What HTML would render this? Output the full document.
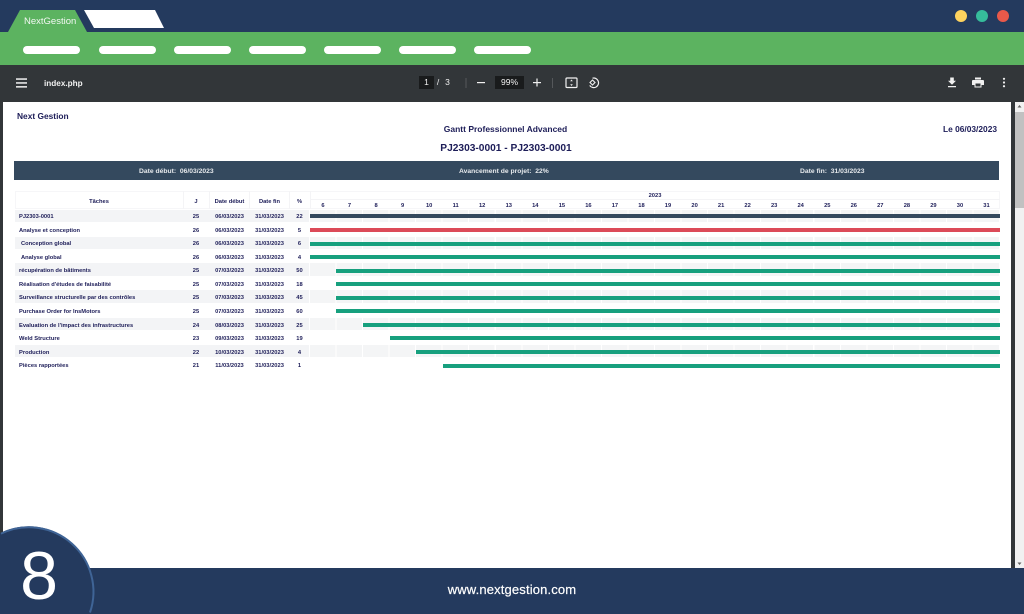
<!DOCTYPE html>
<html lang="fr"><head><meta charset="utf-8"><title>NextGestion</title>
<style>
html,body{margin:0;padding:0;width:1024px;height:614px;overflow:hidden;background:#243a5e;font-family:"Liberation Sans",sans-serif}
div,span{position:absolute;white-space:nowrap}
svg{position:absolute;left:0;top:0}
#wrap{left:0;top:0;width:1024px;height:614px;overflow:hidden;background:#323639;contain:paint}
.pill{top:46px;height:8px;width:57px;border-radius:4px;background:#fff}
.doc{left:0;top:0;width:1024px;height:614px;filter:blur(.35px)}
.t{font-weight:bold;font-size:5.75px;color:#1d1d58;line-height:8px;height:8px;margin-top:1px}
.c{transform:translateX(-50%)}
.s{left:15px;width:294px;height:12.4px;background:#f3f4f6}
.g{left:310px;width:690px;height:12.4px;background:repeating-linear-gradient(90deg,#f4f5f6 0,#f4f5f6 25.5px,#fff 25.5px,#fff 26.54px)}
.b{height:4px;background:#17a07e}
</style></head><body>
<div id="wrap">
<div style="left:0;top:0;width:1024px;height:32px;background:#243a5e"></div>
<div style="left:0;top:32px;width:1024px;height:33px;background:#5cb360"></div>
<div style="left:0;top:65px;width:1024px;height:37px;background:#323639"></div>
<svg width="1024" height="102" viewBox="0 0 1024 102">
<polygon points="8,32 20,10 75,10 87,32" fill="#5cb360"/>
<polygon points="84,10 155,10 164,28 94,28" fill="#fff"/>
<circle cx="961" cy="16" r="6" fill="#fdd25e"/><circle cx="982" cy="16" r="6" fill="#36bc9b"/><circle cx="1003" cy="16" r="6" fill="#e9594a"/>
<g fill="#f1f1f1"><rect x="16" y="78.3" width="11" height="1.5"/><rect x="16" y="82.2" width="11" height="1.5"/><rect x="16" y="86.1" width="11" height="1.5"/></g>
<rect x="419" y="76" width="15" height="13" fill="#191b1c"/><rect x="495" y="76" width="29" height="13" fill="#191b1c"/>
<rect x="465.5" y="78" width="1" height="10" fill="#55585b"/><rect x="552" y="78" width="1" height="10" fill="#55585b"/>
<g fill="#f1f1f1"><rect x="477" y="82" width="8" height="1.2"/><rect x="533" y="82" width="8" height="1.2"/><rect x="536.4" y="78.5" width="1.2" height="8"/></g>
<rect x="566" y="78" width="11" height="9.5" rx="1" fill="none" stroke="#f1f1f1" stroke-width="1.2"/>
<path d="M571.5 79.5l-1.3 1.7h2.6zM571.5 86l-1.3-1.7h2.6z" fill="#f1f1f1"/>
<path d="M592.5 78.2a4.8 4.8 0 1 1-2.8 7.2" fill="none" stroke="#f1f1f1" stroke-width="1.2"/>
<path d="M590 82.5l2.5-2.5 2.5 2.5-2.5 2.5z" fill="none" stroke="#f1f1f1" stroke-width="1.1"/>
<path d="M950.2 77.5h3.6v3.2h2.2l-4 4-4-4h2.2zM948 86h8v1.2h-8z" fill="#f1f1f1"/>
<path d="M975 77.5h6v2h-6zM973 80h10q1 0 1 1v4h-2.5v2.5h-7V85H972v-4q0-1 1-1z" fill="#f1f1f1"/><rect x="975.5" y="83.5" width="5" height="3" fill="#323639"/>
<g fill="#f1f1f1"><circle cx="1004" cy="78.8" r="1.1"/><circle cx="1004" cy="82.5" r="1.1"/><circle cx="1004" cy="86.2" r="1.1"/></g>
</svg>
<div style="left:24px;top:16px;font-size:9.5px;line-height:11px;color:#f2f7f2">NextGestion</div>
<div class="pill" style="left:23px"></div><div class="pill" style="left:99px"></div><div class="pill" style="left:174px"></div><div class="pill" style="left:249px"></div><div class="pill" style="left:324px"></div><div class="pill" style="left:399px"></div><div class="pill" style="left:474px"></div>
<div style="left:44px;top:78px;font-size:8.2px;line-height:11px;font-weight:bold;color:#f1f1f1">index.php</div>
<div class="c" style="left:426.5px;top:77px;font-size:8.5px;line-height:11px;color:#f1f1f1">1</div>
<div class="c" style="left:438px;top:77px;font-size:8.5px;line-height:11px;color:#f1f1f1">/</div>
<div class="c" style="left:447.5px;top:77px;font-size:8.5px;line-height:11px;color:#f1f1f1">3</div>
<div class="c" style="left:509.5px;top:77px;font-size:8.5px;line-height:11px;color:#f1f1f1">99%</div>

<div style="left:3px;top:102px;width:1008px;height:466px;background:#fff"></div>
<div style="left:1015px;top:102px;width:9px;height:466px;background:#f1f1f1"></div>
<div style="left:1015px;top:112px;width:9px;height:96px;background:#c1c1c1"></div>
<svg width="1024" height="614" viewBox="0 0 1024 614"><path d="M1019.5 105l-2 2.5h4zM1019.5 565l-2-2.5h4z" fill="#606060"/></svg>

<div class="doc">
<div class="t" style="left:17px;top:110px;font-size:8.4px;line-height:10px;height:10px">Next Gestion</div>
<div class="t c" style="left:505.5px;top:123px;font-size:8.5px;line-height:10px;height:10px">Gantt Professionnel Advanced</div>
<div class="t" style="left:943px;top:123px;font-size:8.4px;line-height:10px;height:10px">Le 06/03/2023</div>
<div class="t c" style="left:506px;top:141.5px;font-size:10.2px;line-height:12px;height:12px">PJ2303-0001 - PJ2303-0001</div>

<div style="left:14px;top:161px;width:985px;height:19px;background:#34495e"></div>
<div class="t" style="left:139px;top:166.5px;font-size:6.75px;color:#e6e9ec">Date début: &nbsp;06/03/2023</div>
<div class="t" style="left:459px;top:166.5px;font-size:6.75px;color:#e6e9ec">Avancement de projet: &nbsp;22%</div>
<div class="t" style="left:800px;top:166.5px;font-size:6.75px;color:#e6e9ec">Date fin: &nbsp;31/03/2023</div>

<div style="left:15px;top:191px;width:985px;height:18px;box-sizing:border-box;border:1px solid #f6f6f8"></div>
<div style="left:183px;top:191px;width:1px;height:18px;background:#f4f4f6"></div>
<div style="left:209px;top:191px;width:1px;height:18px;background:#f4f4f6"></div>
<div style="left:249px;top:191px;width:1px;height:18px;background:#f4f4f6"></div>
<div style="left:289px;top:191px;width:1px;height:18px;background:#f4f4f6"></div>
<div style="left:310px;top:191px;width:1px;height:18px;background:#f4f4f6"></div>
<div style="left:310px;top:199px;width:690px;height:1px;background:#f4f4f6"></div>

<div class="s" style="top:209.6px"></div><div class="g" style="top:209.6px"></div>
<div class="s" style="top:236.5px"></div><div class="g" style="top:236.5px"></div>
<div class="s" style="top:263.4px"></div><div class="g" style="top:263.4px"></div>
<div class="s" style="top:290.3px"></div><div class="g" style="top:290.3px"></div>
<div class="s" style="top:317.9px"></div><div class="g" style="top:317.9px"></div>
<div class="s" style="top:344.9px"></div><div class="g" style="top:344.9px"></div>

<div class="t c" style="left:99px;top:196.5px">Tâches</div><div class="t c" style="left:196px;top:196.5px">J</div><div class="t c" style="left:229.5px;top:196.5px">Date début</div><div class="t c" style="left:269.5px;top:196.5px">Date fin</div><div class="t c" style="left:299.5px;top:196.5px">%</div>
<div class="t c" style="left:655px;top:190.5px">2023</div>

<div class="t c" style="left:323px;top:200.5px">6</div><div class="t c" style="left:349.5px;top:200.5px">7</div><div class="t c" style="left:376.1px;top:200.5px">8</div><div class="t c" style="left:402.6px;top:200.5px">9</div><div class="t c" style="left:429.2px;top:200.5px">10</div><div class="t c" style="left:455.7px;top:200.5px">11</div><div class="t c" style="left:482.2px;top:200.5px">12</div><div class="t c" style="left:508.8px;top:200.5px">13</div><div class="t c" style="left:535.3px;top:200.5px">14</div><div class="t c" style="left:561.9px;top:200.5px">15</div><div class="t c" style="left:588.4px;top:200.5px">16</div><div class="t c" style="left:614.9px;top:200.5px">17</div><div class="t c" style="left:641.5px;top:200.5px">18</div><div class="t c" style="left:668px;top:200.5px">19</div><div class="t c" style="left:694.6px;top:200.5px">20</div><div class="t c" style="left:721.1px;top:200.5px">21</div><div class="t c" style="left:747.6px;top:200.5px">22</div><div class="t c" style="left:774.2px;top:200.5px">23</div><div class="t c" style="left:800.7px;top:200.5px">24</div><div class="t c" style="left:827.3px;top:200.5px">25</div><div class="t c" style="left:853.8px;top:200.5px">26</div><div class="t c" style="left:880.3px;top:200.5px">27</div><div class="t c" style="left:906.9px;top:200.5px">28</div><div class="t c" style="left:933.4px;top:200.5px">29</div><div class="t c" style="left:960px;top:200.5px">30</div><div class="t c" style="left:986.5px;top:200.5px">31</div>

<div class="t" style="left:19px;top:211.5px">PJ2303-0001</div><div class="t c" style="left:196px;top:211.5px">25</div><div class="t c" style="left:229.5px;top:211.5px">06/03/2023</div><div class="t c" style="left:269.5px;top:211.5px">31/03/2023</div><div class="t c" style="left:299.5px;top:211.5px">22</div>
<div class="t" style="left:19px;top:225.5px">Analyse et conception</div><div class="t c" style="left:196px;top:225.5px">26</div><div class="t c" style="left:229.5px;top:225.5px">06/03/2023</div><div class="t c" style="left:269.5px;top:225.5px">31/03/2023</div><div class="t c" style="left:299.5px;top:225.5px">5</div>
<div class="t" style="left:21px;top:239px">Conception global</div><div class="t c" style="left:196px;top:239px">26</div><div class="t c" style="left:229.5px;top:239px">06/03/2023</div><div class="t c" style="left:269.5px;top:239px">31/03/2023</div><div class="t c" style="left:299.5px;top:239px">6</div>
<div class="t" style="left:21px;top:252.5px">Analyse global</div><div class="t c" style="left:196px;top:252.5px">26</div><div class="t c" style="left:229.5px;top:252.5px">06/03/2023</div><div class="t c" style="left:269.5px;top:252.5px">31/03/2023</div><div class="t c" style="left:299.5px;top:252.5px">4</div>
<div class="t" style="left:19px;top:266px">récupération de bâtiments</div><div class="t c" style="left:196px;top:266px">25</div><div class="t c" style="left:229.5px;top:266px">07/03/2023</div><div class="t c" style="left:269.5px;top:266px">31/03/2023</div><div class="t c" style="left:299.5px;top:266px">50</div>
<div class="t" style="left:19px;top:279.5px">Réalisation d'études de faisabilité</div><div class="t c" style="left:196px;top:279.5px">25</div><div class="t c" style="left:229.5px;top:279.5px">07/03/2023</div><div class="t c" style="left:269.5px;top:279.5px">31/03/2023</div><div class="t c" style="left:299.5px;top:279.5px">18</div>
<div class="t" style="left:19px;top:293px">Surveillance structurelle par des contrôles</div><div class="t c" style="left:196px;top:293px">25</div><div class="t c" style="left:229.5px;top:293px">07/03/2023</div><div class="t c" style="left:269.5px;top:293px">31/03/2023</div><div class="t c" style="left:299.5px;top:293px">45</div>
<div class="t" style="left:19px;top:307px">Purchase Order for InsMotors</div><div class="t c" style="left:196px;top:307px">25</div><div class="t c" style="left:229.5px;top:307px">07/03/2023</div><div class="t c" style="left:269.5px;top:307px">31/03/2023</div><div class="t c" style="left:299.5px;top:307px">60</div>
<div class="t" style="left:19px;top:320.5px">Evaluation de l'impact des infrastructures</div><div class="t c" style="left:196px;top:320.5px">24</div><div class="t c" style="left:229.5px;top:320.5px">08/03/2023</div><div class="t c" style="left:269.5px;top:320.5px">31/03/2023</div><div class="t c" style="left:299.5px;top:320.5px">25</div>
<div class="t" style="left:19px;top:334px">Weld Structure</div><div class="t c" style="left:196px;top:334px">23</div><div class="t c" style="left:229.5px;top:334px">09/03/2023</div><div class="t c" style="left:269.5px;top:334px">31/03/2023</div><div class="t c" style="left:299.5px;top:334px">19</div>
<div class="t" style="left:19px;top:347.5px">Production</div><div class="t c" style="left:196px;top:347.5px">22</div><div class="t c" style="left:229.5px;top:347.5px">10/03/2023</div><div class="t c" style="left:269.5px;top:347.5px">31/03/2023</div><div class="t c" style="left:299.5px;top:347.5px">4</div>
<div class="t" style="left:19px;top:361px">Pièces rapportées</div><div class="t c" style="left:196px;top:361px">21</div><div class="t c" style="left:229.5px;top:361px">11/03/2023</div><div class="t c" style="left:269.5px;top:361px">31/03/2023</div><div class="t c" style="left:299.5px;top:361px">1</div>

<div class="b" style="left:310px;width:690px;top:214px;background:#34495e"></div>
<div class="b" style="left:310px;width:690px;top:227.5px;background:#dc4a58"></div>
<div class="b" style="left:310px;width:690px;top:241.5px"></div>
<div class="b" style="left:310px;width:690px;top:255px"></div>
<div class="b" style="left:336.3px;width:663.7px;top:268.5px"></div>
<div class="b" style="left:336.3px;width:663.7px;top:282px"></div>
<div class="b" style="left:336.3px;width:663.7px;top:295.5px"></div>
<div class="b" style="left:336.3px;width:663.7px;top:309px"></div>
<div class="b" style="left:362.7px;width:637.3px;top:322.5px"></div>
<div class="b" style="left:389.5px;width:610.5px;top:336px"></div>
<div class="b" style="left:416px;width:584px;top:349.5px"></div>
<div class="b" style="left:443px;width:557px;top:363.5px"></div>
</div>

<div style="left:0;top:568px;width:1024px;height:46px;background:#243a5e"></div>
<svg width="1024" height="614" viewBox="0 0 1024 614"><path d="M0 533.1A64.5 64.5 0 0 1 89.6 612.5V614H0Z" fill="#243a5e"/><path d="M1 533.6A64.5 64.5 0 0 1 90 612.5" fill="none" stroke="#3f6496" stroke-width="2"/></svg>
<div class="c" style="left:39px;top:541px;height:70px;overflow:hidden;font-size:68px;line-height:70px;color:#fff">8</div>
<div class="c" style="left:512px;top:582px;font-size:13px;line-height:16px;color:#fff;letter-spacing:.15px;-webkit-text-stroke:.2px #fff">www.nextgestion.com</div>
</div>
</body></html>
